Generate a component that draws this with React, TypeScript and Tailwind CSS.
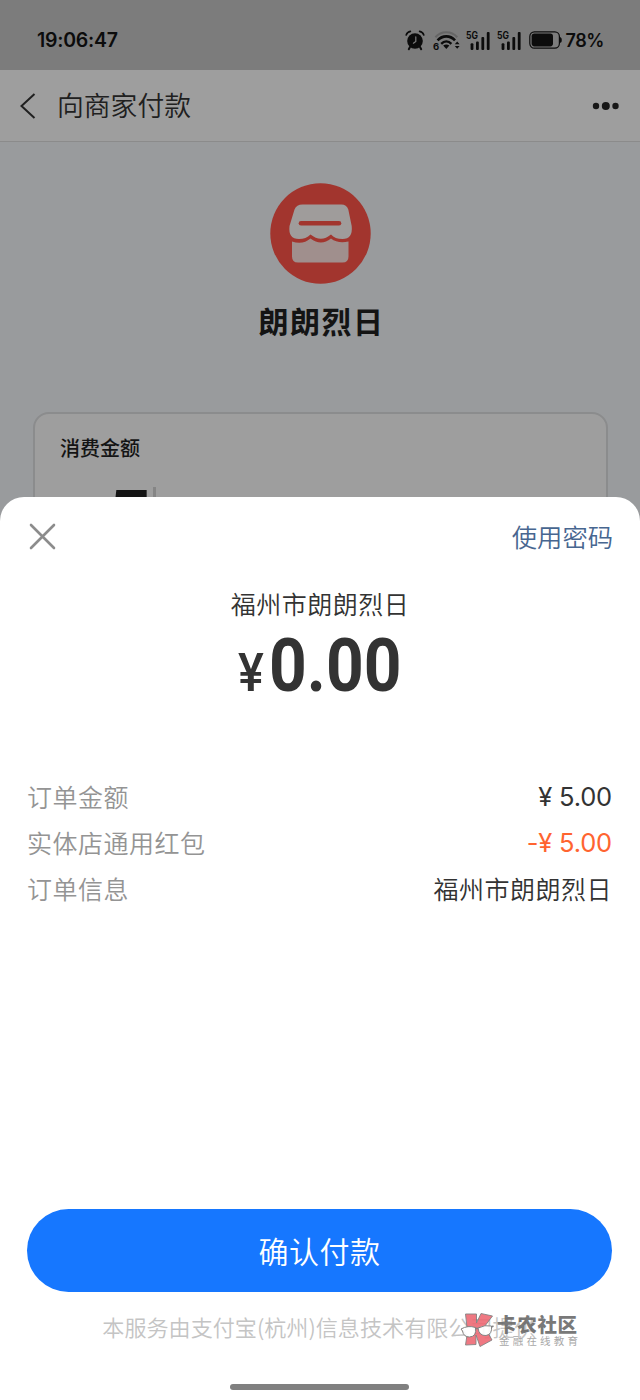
import React from 'react';

const orderRows = [
  { label: '订单金额', value: '¥ 5.00', type: 'price' },
  { label: '实体店通用红包', value: '-¥ 5.00', type: 'discount' },
  { label: '订单信息', value: '福州市朗朗烈日', type: 'text' }
];

const getValueClass = (type: string) => {
  switch (type) {
    case 'price':
      return "pt-px font-['Inter','Noto_Sans_CJK_SC',sans-serif] text-[25.5px] tracking-[-0.2px] text-[#333333]";
    case 'discount':
      return "pt-px font-['Inter','Noto_Sans_CJK_SC',sans-serif] text-[25.5px] tracking-[-0.2px] text-[#ff6430]";
    default:
      return 'text-[25px] font-[350] tracking-[0.5px] text-[#333333]';
  }
};

const AlarmIcon: React.FC = () => (
  <svg width="20" height="21" viewBox="0 0 20 21" className="shrink-0" fill="none">
    <circle cx="10" cy="11" r="7.8" fill="#0c0c0c" />
    <path d="M1.2 5C1.8 3.2 3.4 1.8 5.4 1.4M18.8 5C18.2 3.2 16.6 1.8 14.6 1.4" stroke="#0c0c0c" strokeWidth="1.6" strokeLinecap="round" />
    <path d="M5 17l-1.2 2.2M15 17l1.2 2.2" stroke="#0c0c0c" strokeWidth="2" strokeLinecap="round" />
    <path d="M10.8 6.8v4.6L8.4 13.2" stroke="#7c7c7c" strokeWidth="1.2" strokeLinecap="round" />
  </svg>
);

const WifiIcon: React.FC = () => (
  <svg width="27" height="21" viewBox="0 0 27 21" className="shrink-0" fill="none">
    <path d="M2.4 7.2C8.4 .6 18.2 .6 24.2 7.2" stroke="#666666" strokeWidth="2.2" />
    <path d="M4.6 10.4C9.4 5 17.2 5 22 10.4" stroke="#0c0c0c" strokeWidth="2.6" />
    <path d="M8.2 13.8C11.2 10.8 15.4 10.8 18.4 13.8" stroke="#0c0c0c" strokeWidth="2.4" />
    <path d="M10.2 15.6q3.1-2 6.2 0L13.3 19z" fill="#0c0c0c" />
    <path d="M21.8 14.2l2.4-2.7 2.4 2.7zM21.8 16l2.4 2.7L26.6 16z" fill="#0c0c0c" />
    <text x="0" y="19.5" fontSize="9.5" fontWeight="700" fontFamily="Inter, sans-serif" fill="#0c0c0c">6</text>
  </svg>
);

const SignalIcon: React.FC = () => (
  <svg width="25" height="21" viewBox="0 0 25 21" className="shrink-0">
    <text x="0" y="8.6" fontSize="10" fontWeight="700" fontFamily="Inter, sans-serif" fill="#0c0c0c" textLength="12" lengthAdjust="spacingAndGlyphs">5G</text>
    <rect x="4.6" y="13.2" width="2.8" height="6.8" rx="1" fill="#0c0c0c" />
    <rect x="10" y="11.5" width="2.8" height="8.5" rx="1" fill="#0c0c0c" />
    <rect x="15.4" y="7" width="2.8" height="13" rx="1" fill="#0c0c0c" />
    <rect x="20.8" y="2" width="2.8" height="18" rx="1" fill="#0c0c0c" />
  </svg>
);

const BatteryIcon: React.FC = () => (
  <svg width="34" height="18" viewBox="0 0 34 18" className="shrink-0" fill="none">
    <rect x="0.8" y="0.8" width="29.6" height="16.4" rx="4.6" stroke="#0c0c0c" strokeWidth="1.2" />
    <rect x="2.6" y="2.6" width="21.4" height="12.8" rx="2.8" fill="#0c0c0c" />
    <path d="M31 6.2h.6q1.2.4 1.2 2.8t-1.2 2.8H31z" fill="#0c0c0c" />
  </svg>
);

const ShopIcon: React.FC = () => (
  <svg width="101" height="101" viewBox="0 0 101 101">
    <circle cx="50.5" cy="50.5" r="50.2" fill="#a2352e" />
    <path d="M32.500 21.5H71.5Q76.5 21.5 78.3 26.5L81.7 43Q83 56 72.5 56Q65 56 61 51.5Q51 60 40.5 51.5Q36 56 29 56Q18 56 19.5 43L24.500 26.5Q26.5 21.5 32.5 21.5Z" fill="#9f9c9b" />
    <path d="M22 58.5Q33 62 40.5 55.5Q51 63.5 61 55.5Q68 61 78.5 58.5V73.5Q78.5 79.5 72.5 79.5H28Q22 79.5 22 73.5Z" fill="#a08f8d" />
    <path d="M31 40.3H69" stroke="#a2352e" strokeWidth="4.6" strokeLinecap="round" />
  </svg>
);

const WatermarkLogo: React.FC = () => (
  <svg width="34" height="36" viewBox="0 0 34 36" className="shrink-0" fill="none">
    <path d="M5.5 2H16.5V11L21 1.5L32.5 4L24.5 14.5L32 28L20 34.500L16 23V32.500L5.500 33L7.500 20Z" fill="#ee6a75" stroke="#777777" strokeWidth="0.9" />
    <path d="M1 17Q8 13 15.5 15.5Q17 24.500 9.500 25Q3.500 25 2.500 19Z" fill="#ffffff" stroke="#777777" strokeWidth="1" />
    <path d="M18 16Q25 12.500 31.5 14Q32.5 22.500 26 23.500Q19 24 18 16Z" fill="#ffffff" stroke="#777777" strokeWidth="1" />
    <path d="M15.500 16.5h2.500M31.5 15l2-1" stroke="#777777" strokeWidth="1.4" />
  </svg>
);

const App: React.FC = () => {
  return (
    <div className="relative flex h-[1400px] w-[640px] flex-col overflow-hidden bg-[#999b9d] font-['Noto_Sans_CJK_SC',sans-serif]">
      {/* Dimmed page behind the sheet */}
      <div className="flex h-[521px] shrink-0 flex-col overflow-hidden">
        {/* Status bar */}
        <div className="flex h-[70px] shrink-0 items-center bg-[#7c7c7c] pt-[10px] pr-[36px] pl-[37px] font-['Inter',sans-serif] text-[#0c0c0c]">
          <span className="pt-px text-[19.5px] font-semibold tracking-[-0.25px]">19:06:47</span>
          <div className="ml-auto flex items-center">
            <AlarmIcon />
            <div className="ml-[8px] flex"><WifiIcon /></div>
            <div className="ml-[6px] flex"><SignalIcon /></div>
            <div className="ml-[6px] flex"><SignalIcon /></div>
            <div className="ml-[7px] flex"><BatteryIcon /></div>
            <span className="ml-[2px] pt-px text-[18px] font-semibold tracking-[-0.4px]">78%</span>
          </div>
        </div>

        {/* Navigation */}
        <div className="flex h-[72px] shrink-0 items-center border-b border-[#8b8b8b] bg-[#9e9e9e] pr-[20px] pl-[20px]">
          <svg width="16" height="28" viewBox="0 0 16 28" fill="none">
            <path d="M14.5 2L1.5 14L14.5 26" stroke="#202020" strokeWidth="2" />
          </svg>
          <h1 className="ml-[21px] text-[26.8px] leading-none font-[350] text-[#202020]">向商家付款</h1>
          <svg width="28" height="10" viewBox="0 0 28 10" className="ml-auto">
            <circle cx="4" cy="5" r="3.2" fill="#181818" />
            <circle cx="13.8" cy="5" r="4" fill="#181818" />
            <circle cx="23.5" cy="5" r="3.2" fill="#181818" />
          </svg>
        </div>

        {/* Merchant */}
        <div className="flex shrink-0 flex-col items-center pt-[41px]">
          <ShopIcon />
          <h2 className="mt-[15px] pl-[3px] text-[30px] leading-[42px] font-bold tracking-[1.5px] text-[#141414]">朗朗烈日</h2>
        </div>

        {/* Amount card */}
        <div className="mr-[32px] ml-[33px] mt-[71px] h-[200px] shrink-0 rounded-[16px] border-2 border-[#8b8c8d] bg-[#9e9e9e] px-[25px] pt-[20px]">
          <p className="text-[20px] leading-[28px] font-medium text-[#141414]">消费金额</p>
          <div className="mt-[18px] flex items-start pl-[48px]">
            <span className="w-[45px] font-['Roboto',sans-serif] text-[76px] leading-[76px] font-bold text-[#141414]">5</span>
            <span className="mt-[7px] h-[54px] w-[3px] bg-[#858585]" />
          </div>
        </div>
      </div>

      {/* Payment sheet */}
      <div className="relative -mt-[24px] flex flex-1 flex-col rounded-t-[24px] bg-white">
        <div className="flex h-[78px] items-center justify-between pr-[27px] pl-[29px]">
          <svg width="27" height="27" viewBox="0 0 27 27">
            <path d="M2 2L25 25M25 2L2 25" stroke="#8c8c8c" strokeWidth="2.6" strokeLinecap="round" />
          </svg>
          <button className="pt-[2px] text-[25.3px] leading-none font-[350] text-[#476690]">使用密码</button>
        </div>

        <div className="flex flex-col items-center">
          <p className="mt-[10px] text-[25px] leading-[36px] font-[350] tracking-[0.5px] text-[#333333]">福州市朗朗烈日</p>
          <div className="mt-[5px] flex items-baseline pl-[16px] font-['Roboto',sans-serif] text-[#333333]">
            <span className="origin-left scale-x-90 text-[54px] leading-[80px] font-medium">¥</span>
            <span className="ml-[2px] origin-left scale-x-[0.89] text-[74px] leading-[80px] font-bold">0.00</span>
          </div>
        </div>

        <div className="mt-[61px] flex flex-col pr-[28px] pl-[27px]">
          {orderRows.map((row) => (
            <div key={row.label} className="flex h-[46px] items-center justify-between">
              <span className="text-[25px] font-[350] tracking-[0.5px] text-[#949494]">{row.label}</span>
              <span className={getValueClass(row.type)}>{row.value}</span>
            </div>
          ))}
        </div>

        <div className="mt-auto flex flex-col items-center pr-px pb-[10px]">
          <button className="h-[83px] w-[585px] rounded-full bg-[#1677ff] text-[30px] font-[350] tracking-[0.5px] text-white">确认付款</button>
          <p className="mt-[17px] text-[22.1px] leading-[34px] font-[350] text-[#c4c4c4]">本服务由支付宝(杭州)信息技术有限公司提供</p>
          <div className="mt-[41px] h-[6px] w-[179px] rounded-full bg-[#808080]" />
        </div>
      </div>

      {/* Community watermark */}
      <div className="absolute top-[1312px] left-[460px] flex items-center opacity-90">
        <WatermarkLogo />
        <div className="ml-[3px] flex flex-col">
          <span className="text-[19.5px] leading-[22px] font-black tracking-[0.7px] text-[#6b6b6b]">卡农社区</span>
          <span className="pl-[2px] text-[10.5px] leading-[12px] font-normal tracking-[3.2px] text-[#a0a0a0]">金融在线教育</span>
        </div>
      </div>
    </div>
  );
};

export default App;
